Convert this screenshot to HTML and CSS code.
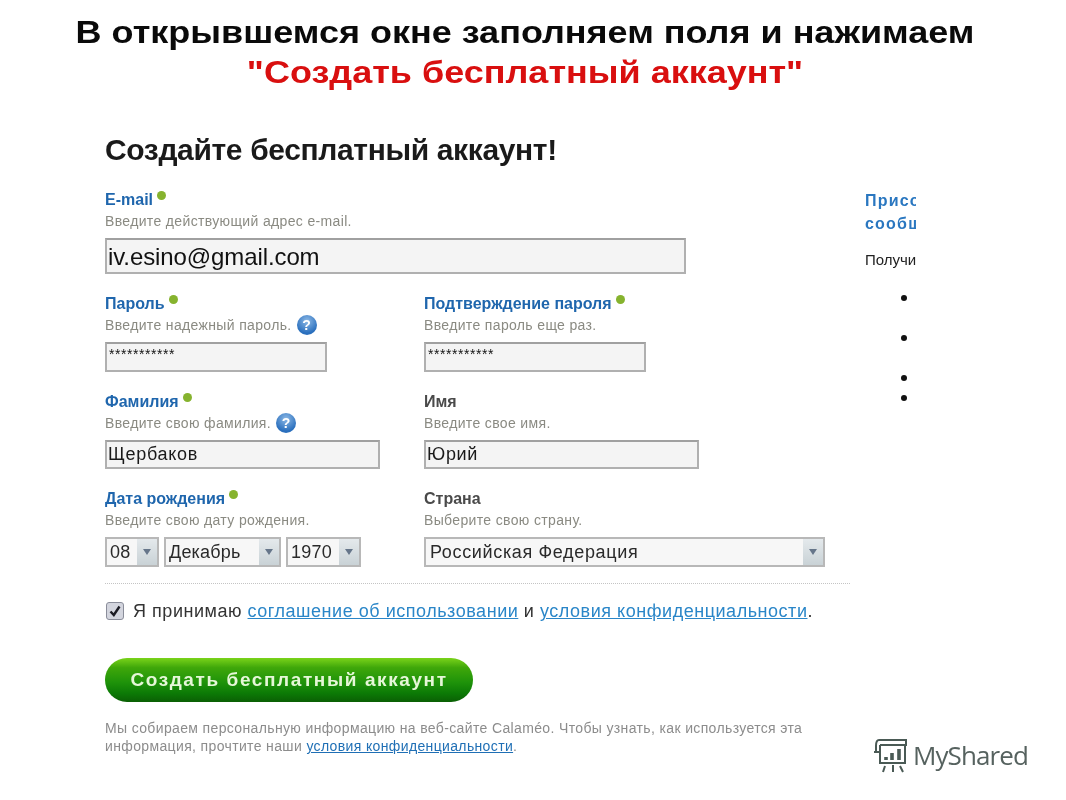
FILE: index.html
```html
<!DOCTYPE html>
<html lang="ru">
<head>
<meta charset="utf-8">
<title>Создать бесплатный аккаунт</title>
<link rel="stylesheet" href="styles.css">
</head>
<body>
<header class="slide-title">
  <div class="title-line">В открывшемся окне заполняем поля и нажимаем</div>
  <div class="title-line title-red">"Создать бесплатный аккаунт"</div>
</header>
<main class="sheet">
  <section class="form">
    <h1 class="form-title">Создайте бесплатный аккаунт!</h1>
    <div class="grid">
      <div class="field wide">
        <div class="label">E-mail<i class="dot"></i></div>
        <div class="hint">Введите действующий адрес e-mail.</div>
        <div class="input input-email">iv.esino@gmail.com</div>
      </div>
      <div class="field">
        <div class="label">Пароль<i class="dot"></i></div>
        <div class="hint">Введите надежный пароль.<i class="help">?</i></div>
        <div class="input input-short stars">***********</div>
      </div>
      <div class="field">
        <div class="label">Подтверждение пароля<i class="dot"></i></div>
        <div class="hint">Введите пароль еще раз.</div>
        <div class="input input-short stars">***********</div>
      </div>
      <div class="field">
        <div class="label">Фамилия<i class="dot"></i></div>
        <div class="hint">Введите свою фамилия.<i class="help">?</i></div>
        <div class="input input-name">Щербаков</div>
      </div>
      <div class="field">
        <div class="label label-dark">Имя</div>
        <div class="hint">Введите свое имя.</div>
        <div class="input input-name">Юрий</div>
      </div>
      <div class="field">
        <div class="label">Дата рождения<i class="dot"></i></div>
        <div class="hint">Введите свою дату рождения.</div>
        <div class="date-row">
          <div class="select sel-day"><span class="sel-text">08</span><span class="sel-arrow"></span></div>
          <div class="select sel-month"><span class="sel-text">Декабрь</span><span class="sel-arrow"></span></div>
          <div class="select sel-year"><span class="sel-text">1970</span><span class="sel-arrow"></span></div>
        </div>
      </div>
      <div class="field">
        <div class="label label-dark">Страна</div>
        <div class="hint">Выберите свою страну.</div>
        <div class="select sel-country"><span class="sel-text">Российская Федерация</span><span class="sel-arrow"></span></div>
      </div>
    </div>
    <div class="divider"></div>
    <div class="accept">
      <span class="check"><svg viewBox="0 0 14 14" width="14" height="14"><path d="M2.5 7.5 L5.8 11 L11.5 2.5" fill="none" stroke="#1c1c24" stroke-width="2.4"/></svg></span>
      <span>Я принимаю <a class="link" href="#">соглашение об использовании</a> и <a class="link" href="#">условия конфиденциальности</a>.</span>
    </div>
    <a class="cta" href="#">Создать бесплатный аккаунт</a>
    <p class="note">Мы собираем персональную информацию на веб-сайте Calaméo. Чтобы узнать, как используется эта<br>информация, прочтите наши <a class="note-link" href="#">условия конфиденциальности</a>.</p>
  </section>
  <aside class="aside">
    <div class="aside-title">Присоединяйтесь<br>сообществу</div>
    <div class="aside-lead">Получите</div>
    <ul class="aside-list">
      <li class="li-a"></li>
      <li class="li-a"></li>
      <li class="li-b"></li>
      <li class="li-c"></li>
    </ul>
  </aside>
</main>
<div class="brand">
  <svg class="brand-icon" viewBox="0 0 36 36" width="36" height="36" fill="none" stroke="#4a5a55" stroke-width="2">
    <path d="M6 3 H33 V8 H7"/>
    <path d="M6 3 C3 3 3 6 3 9 V15 H7 M3 15 H1"/>
    <path d="M7 8 V26 H32 V8"/>
    <path d="M12 29 L10 35 M20 28 V35 M27 29 L30 35"/>
    <path d="M13 23 V20 M19 23 V16 M26 23 V12" stroke-width="3.6"/>
  </svg>
  <span class="brand-text">MyShared</span>
</div>
</body>
</html>
```
FILE: styles.css
```css
* { box-sizing: border-box; }
html, body { margin: 0; padding: 0; }
body { width: 1066px; height: 800px; overflow: hidden; background: #fff; font-family: "Liberation Sans", Arial, sans-serif; position: relative; }

.slide-title { padding-top: 12px; text-align: center; padding-right: 16px; }
.title-line { font-size: 32px; line-height: 40px; font-weight: 700; color: #0a0a0a; white-space: nowrap; transform: scaleX(1.125); }
.title-red { color: #d90f0f; }

.sheet { display: flex; padding-left: 105px; }
.form { width: 745px; flex: none; filter: blur(0.4px); }
.form-title { margin: 40px 0 0; font-size: 30px; line-height: 36px; font-weight: 700; color: #1a1a1a; letter-spacing: -0.36px; }

.grid { display: grid; grid-template-columns: 319px 1fr; row-gap: 20px; margin-top: 22px; }
.wide { grid-column: 1 / -1; }
.label { font-size: 16px; line-height: 20px; font-weight: 700; color: #1f66ad; white-space: nowrap; }
.label-dark { color: #4a4a4a; }
.dot { display: inline-block; width: 9px; height: 9px; margin-left: 4px; border-radius: 50%; background: #86b32e; vertical-align: 5px; }
.hint { margin-top: 2px; height: 18px; font-size: 14px; line-height: 18px; color: #8a8a82; letter-spacing: 0.35px; display: flex; align-items: center; white-space: nowrap; }
.help { flex: none; width: 20px; height: 20px; margin-left: 5px; border-radius: 50%; background: radial-gradient(circle at 50% 30%, #8db9e6, #2a6fbd 70%); color: #fff; font: 700 14px/20px "Liberation Sans", sans-serif; text-align: center; letter-spacing: 0; }
.input { margin-top: 8px; height: 30px; border: 2px solid #b0b0b0; border-top-color: #a0a0a0; background: #f4f4f4; color: #1a1a1a; font-size: 18px; line-height: 26px; white-space: nowrap; }
.input-email { width: 581px; height: 36px; font-size: 24px; line-height: 33px; padding-left: 1px; letter-spacing: -0.1px; color: #111; }
.input-short { width: 222px; }
.stars { font-size: 14px; line-height: 20px; padding-left: 2px; letter-spacing: 0.55px; color: #111; }
.input-name { width: 275px; height: 29px; line-height: 25px; padding-left: 1px; letter-spacing: 0.7px; }
.date-row { display: flex; gap: 5px; }
.select { margin-top: 8px; height: 30px; display: flex; justify-content: space-between; border: 2px solid #b8b8b8; background: #f7f7f7; color: #2a2a2a; font-size: 18px; line-height: 26px; }
.sel-text { padding-left: 3px; white-space: nowrap; letter-spacing: 0.2px; }
.sel-arrow { width: 20px; position: relative; background: linear-gradient(#e4e9ec, #c9d2d6); }
.sel-arrow::after { content: ""; position: absolute; left: 6px; top: 10px; border: 4px solid transparent; border-top: 6px solid #66768a; border-bottom: 0; }
.sel-day { width: 54px; }
.sel-month { width: 117px; }
.sel-year { width: 75px; }
.sel-country { width: 401px; }
.sel-country .sel-text { padding-left: 4px; letter-spacing: 0.65px; }

.divider { margin-top: 16px; border-top: 1px dotted #c4c4c4; }
.accept { margin-top: 16px; height: 22px; display: flex; align-items: center; gap: 9px; font-size: 18px; line-height: 22px; letter-spacing: 0.53px; color: #333; white-space: nowrap; }
.check { width: 18px; height: 18px; margin-left: 1px; flex: none; border: 1.5px solid #8a8d9a; border-radius: 3px; background: #d3d5de; display: flex; align-items: center; justify-content: center; }
.link { color: #2a86c8; text-decoration: underline; }

.cta { display: block; margin-top: 36px; width: 368px; height: 44px; border-radius: 22px; background: linear-gradient(#7ad31a 0%, #3fa70a 22%, #1f930a 55%, #0c7a06 80%, #0a5f04 100%); color: #e6f7d8; font-size: 19px; line-height: 44px; font-weight: 700; letter-spacing: 1.6px; text-align: center; text-decoration: none; white-space: nowrap; }
.note { margin: 17px 0 0; font-size: 14px; line-height: 18px; color: #8c8c8c; white-space: nowrap; letter-spacing: 0.36px; }
.note-link { color: #1f6fb5; text-decoration: underline; }

.aside { margin-left: 15px; margin-top: 97px; width: 51px; height: 320px; overflow: hidden; flex: none; white-space: nowrap; filter: blur(0.3px); }
.aside-title { font-size: 16px; line-height: 23px; font-weight: 700; color: #2a77c0; letter-spacing: 1.2px; }
.aside-lead { margin-top: 15px; font-size: 15px; line-height: 20px; color: #222; }
.aside-list { list-style: none; margin: 25px 0 0; padding: 0 0 0 36px; }
.aside-list li { width: 6px; height: 6px; border-radius: 50%; background: #111; }
.li-a { margin-bottom: 34px; }
.li-b { margin-bottom: 14px; }

.brand { position: absolute; left: 873px; top: 737px; display: flex; align-items: center; gap: 4px; filter: blur(0.3px); }
.brand-text { font-family: "Open Sans", "Noto Sans", sans-serif; font-size: 26px; line-height: 36px; color: #56625f; letter-spacing: -0.9px; }
```
